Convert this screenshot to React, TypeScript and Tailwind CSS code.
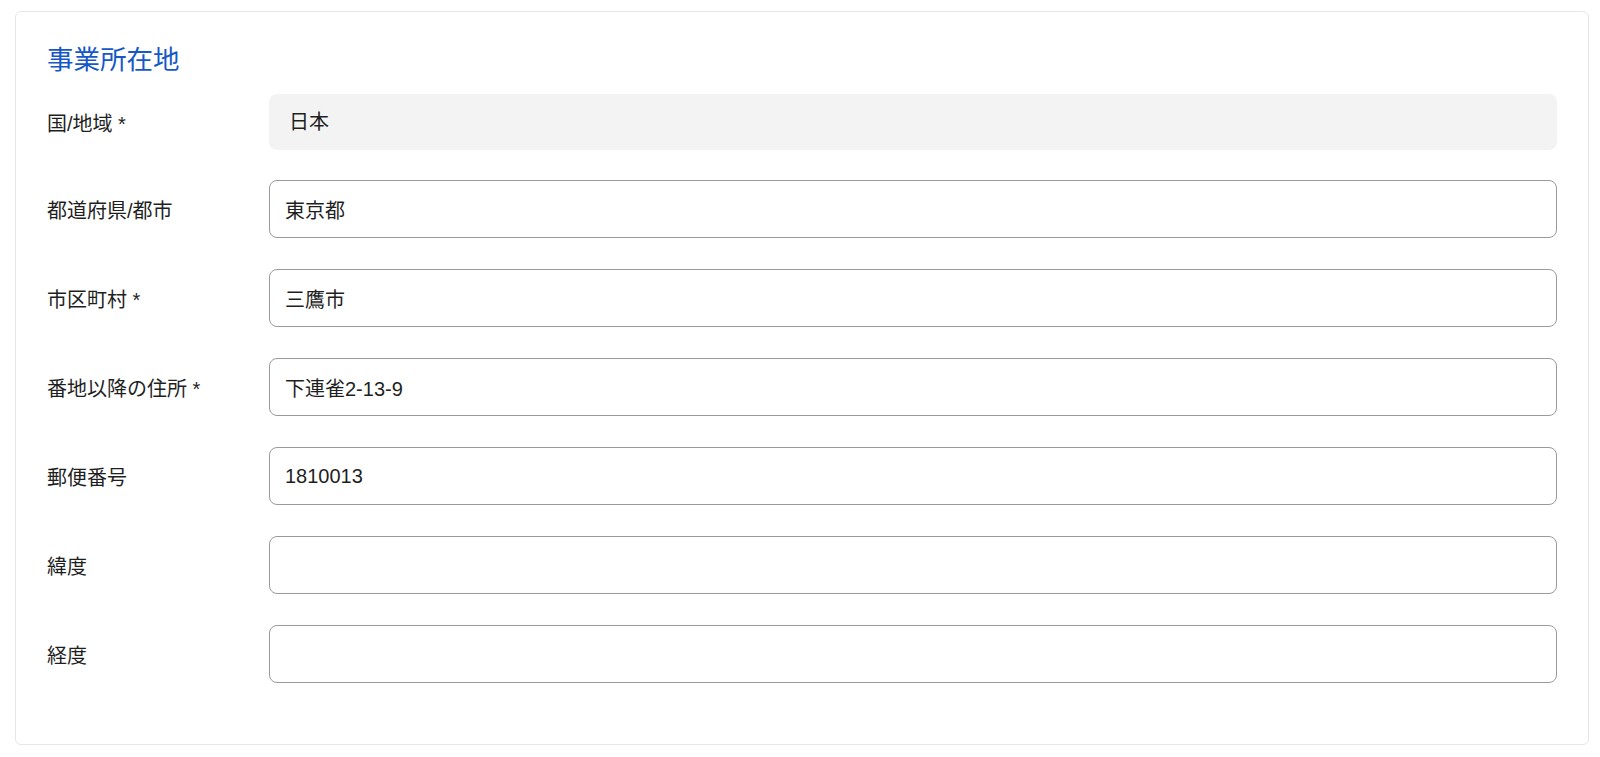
const rows: { label: string; value: string }[] = [
  { label: "都道府県/都市", value: "東京都" },
  { label: "市区町村 *", value: "三鷹市" },
  { label: "番地以降の住所 *", value: "下連雀2-13-9" },
  { label: "郵便番号", value: "1810013" },
  { label: "緯度", value: "" },
  { label: "経度", value: "" },
]

export default function App() {
  return (
    <div
      className="min-h-screen bg-white pt-[11px] pb-[12px] pl-[15px] pr-[11px]"
      style={{ fontFamily: '"Liberation Sans", "Noto Sans CJK JP", sans-serif' }}
    >
      <div className="border border-[#e6e6e6] rounded-md pt-[32px] pb-[61px] pl-[31px] pr-[31px]">
        <h2 className="text-[26.5px] leading-[32px] text-[#1558c6] font-normal mb-[18px]">事業所在地</h2>

        <div className="flex items-center">
          <div className="w-[222px] shrink-0 pt-[4px] text-[20px] text-[#1f1f1f]">国/地域 *</div>
          <div className="flex-1 h-[56px] rounded-lg bg-[#f3f3f3] flex items-center pl-[20px] text-[20px] text-[#1f1f1f]">
            日本
          </div>
        </div>

        <div className="flex flex-col gap-[31px] mt-[30px]">
          {rows.map((r) => (
            <div key={r.label} className="flex items-center">
              <label className="w-[222px] shrink-0 pt-[4px] text-[20px] text-[#1f1f1f]">{r.label}</label>
              <input
                readOnly
                value={r.value}
                className="flex-1 h-[58px] rounded-lg border border-[#9a9a9a] bg-white px-[15px] text-[20px] text-[#1f1f1f] outline-none"
              />
            </div>
          ))}
        </div>
      </div>
    </div>
  )
}
